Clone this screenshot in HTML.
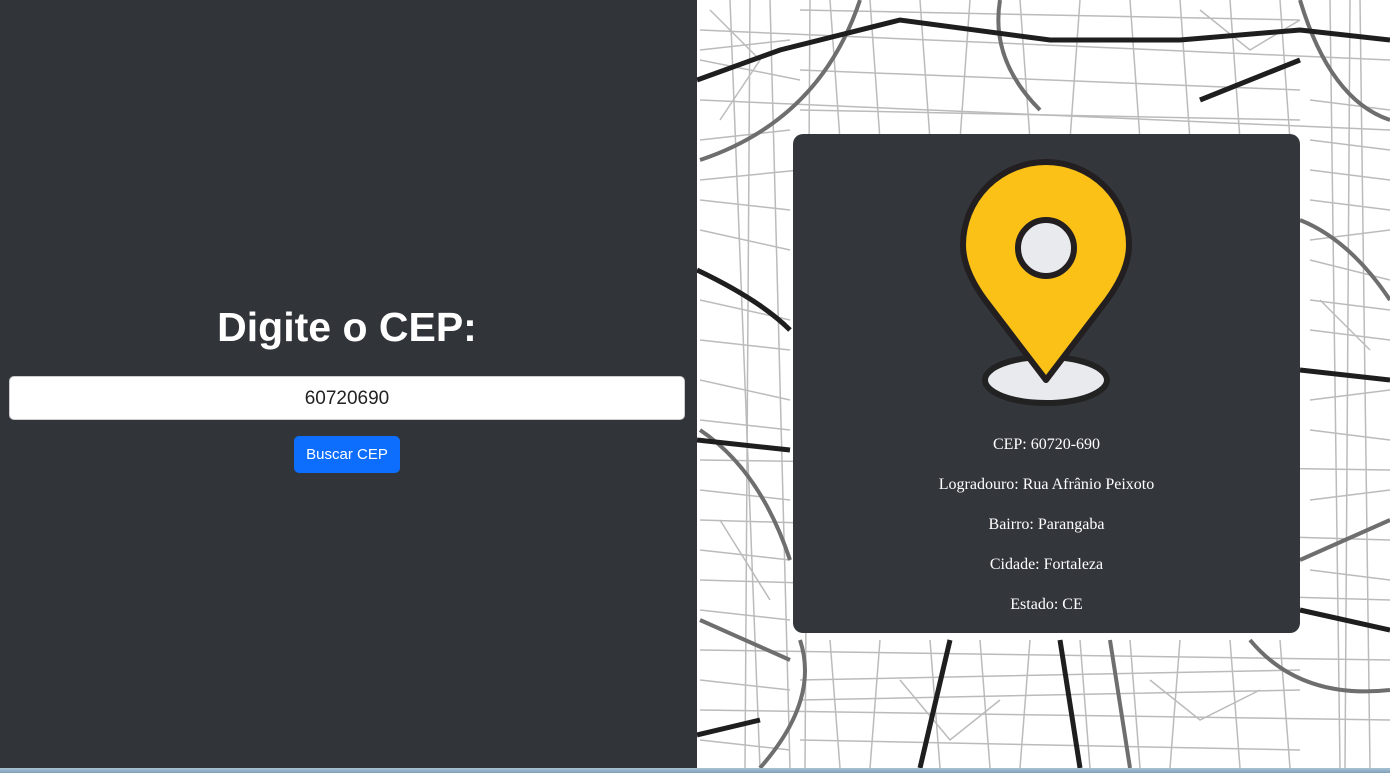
<!DOCTYPE html>
<html><head><meta charset="utf-8"><style>
html,body{margin:0;padding:0;width:1390px;height:773px;overflow:hidden;background:#fff}
.left{position:absolute;left:0;top:0;width:697px;height:768px;background:#313439}
h1{position:absolute;left:0;width:694px;top:304px;margin:0;text-align:center;color:#fff;font:bold 41px "Liberation Sans",sans-serif;line-height:46px}
.inp{position:absolute;left:9px;top:376px;width:674px;height:42px;background:#fff;border:1px solid #ccc;border-radius:5px;text-align:center;font:19px "Liberation Sans",sans-serif;line-height:43px;color:#222}
.btn{position:absolute;left:294px;top:436px;width:106px;height:37px;background:#0d6efd;border-radius:5px;color:#fff;font:15px "Liberation Sans",sans-serif;text-align:center;line-height:37px}
.map{position:absolute;left:697px;top:0;width:693px;height:768px}
.card{position:absolute;left:793px;top:134px;width:507px;height:499px;background:#33363b;border-radius:10px}
.card p{position:absolute;left:0;width:507px;margin:0;text-align:center;color:#fff;font:16px "Liberation Serif",serif}
.task{position:absolute;left:0;top:768px;width:1390px;height:5px;background:linear-gradient(#a9c2d6,#7f9fb8)}
</style></head><body>
<div class="left">
<h1>Digite o CEP:</h1>
<div class="inp">60720690</div>
<div class="btn">Buscar CEP</div>
</div>
<svg class="map" viewBox="697 0 693 768" xmlns="http://www.w3.org/2000/svg">
<rect x="697" y="0" width="693" height="768" fill="#fff"/>
<g stroke="#bbb" stroke-width="1.5" fill="none">
<path d="M700 30 L1390 60 M700 100 L1390 130 M700 180 L800 170 M700 230 L790 250 M700 300 L790 320 M700 380 L790 400 M700 460 L1390 470 M700 520 L1390 540 M700 580 L1390 600 M700 650 L1390 660 M700 710 L1390 720"/>
<path d="M730 0 L760 768 M770 0 L790 768 M830 0 L840 140 M870 0 L880 140 M920 0 L930 140 M970 0 L960 140 M1020 0 L1030 140 M1080 0 L1070 140 M1130 0 L1140 140 M1180 0 L1190 140 M1230 0 L1240 140 M1280 0 L1290 140 M1330 0 L1340 768 M1360 0 L1370 768 M830 640 L840 768 M880 640 L870 768 M930 640 L940 768 M980 640 L990 768 M1030 640 L1020 768 M1080 640 L1090 768 M1130 640 L1140 768 M1180 640 L1170 768 M1230 640 L1240 768 M1280 640 L1290 768 M1310 140 L1390 150 M1310 200 L1390 210 M1310 260 L1390 280 M1310 330 L1390 340 M1310 400 L1390 390 M700 140 L790 130 M700 60 L800 80"/>
<path d="M710 10 L760 60 L720 120 M1200 10 L1250 50 L1300 20 M900 680 L950 740 L1000 700 M1150 680 L1200 720 L1260 690 M1320 300 L1370 350 M720 520 L770 600"/>
<path d="M700 50 L790 40 M700 200 L790 210 M700 340 L790 350 M700 420 L790 430 M700 490 L790 500 M700 550 L790 560 M700 610 L790 620 M700 680 L790 690 M700 740 L790 750 M800 10 L1300 20 M800 70 L1300 90 M800 110 L1300 120 M1310 100 L1390 110 M1310 170 L1390 180 M1310 240 L1390 230 M1310 300 L1390 310 M1310 430 L1390 440 M1310 500 L1390 490 M1310 570 L1390 580 M800 700 L1300 690 M800 740 L1300 750 M800 680 L1300 670 M1350 0 L1345 768 M750 0 L745 768 M810 0 L805 768"/>
</g>
<g stroke="#6e6e6e" stroke-width="4" fill="none">
<path d="M860 0 Q820 120 700 160 M1000 0 Q990 60 1040 110 M1300 0 Q1330 100 1390 120 M700 430 Q760 470 790 560 M760 768 Q820 700 800 640 M1250 640 Q1300 700 1390 690 M1300 560 L1390 520 M700 620 L790 660 M1110 640 L1130 768 M1300 220 Q1350 240 1390 300"/>
</g>
<g stroke="#1e1e1e" stroke-width="5" fill="none">
<path d="M697 80 L780 50 L900 20 L1050 40 L1180 40 L1300 30 L1390 40 M697 270 Q760 300 790 330 M1300 370 L1390 380 M697 440 L790 450 M1060 640 L1080 768 M697 735 L760 720 M1300 610 L1390 630 M950 640 L920 768 M1200 100 L1300 60"/>
</g>
</svg>
<div class="card">
<svg style="position:absolute;left:0;top:0" width="507" height="300" viewBox="793 134 507 300">
<ellipse cx="1046" cy="380" rx="61" ry="23" fill="#e8eaee" stroke="#222" stroke-width="6"/>
<path d="M1046 380 L985 300 Q963 270 963 245 A83 83 0 0 1 1129 245 Q1129 270 1107 300 Z" fill="#fbc117" stroke="#231f20" stroke-width="6" stroke-linejoin="round"/>
<circle cx="1046" cy="248" r="28" fill="#e8eaee" stroke="#231f20" stroke-width="6"/>
</svg>
<p style="top:302px">CEP: 60720-690</p>
<p style="top:342px">Logradouro: Rua Afrânio Peixoto</p>
<p style="top:382px">Bairro: Parangaba</p>
<p style="top:422px">Cidade: Fortaleza</p>
<p style="top:462px">Estado: CE</p>
</div>
<div class="task"></div>
</body></html>
